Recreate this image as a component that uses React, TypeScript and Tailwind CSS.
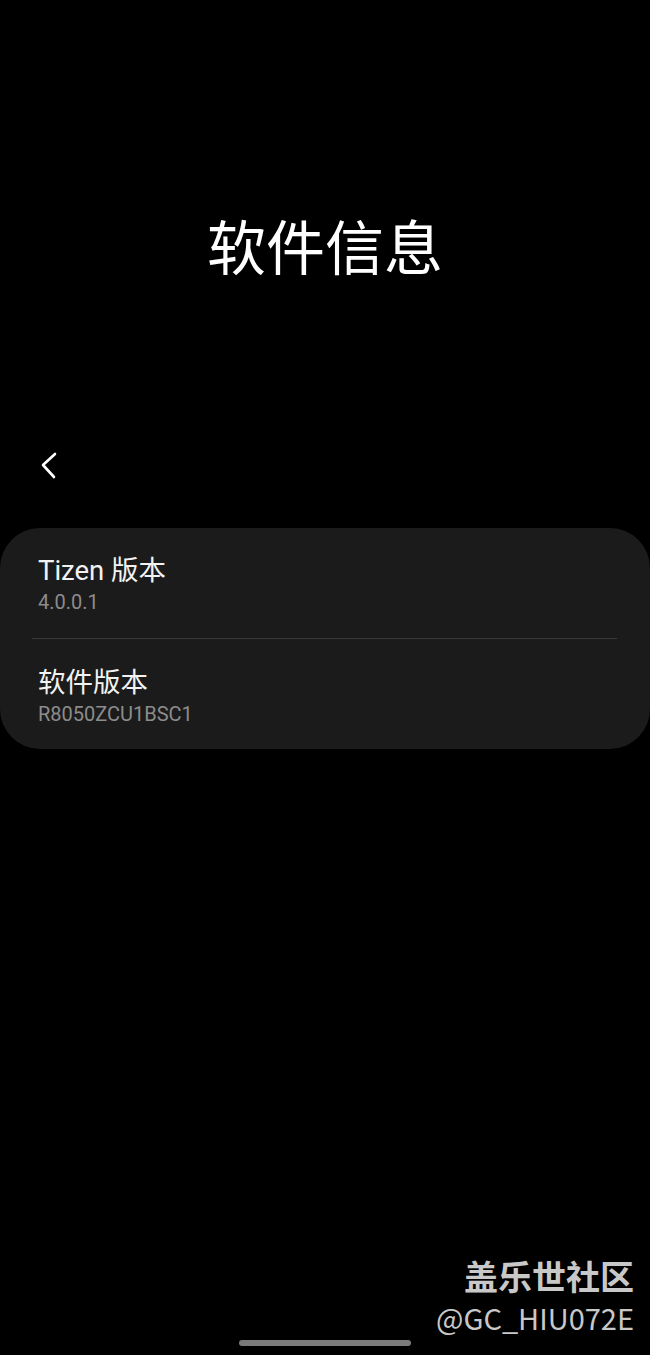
const cjk = "font-['Roboto','Noto_Sans_CJK_SC',sans-serif]";

function ChevronLeft() {
  return (
    <svg width="20" height="30" viewBox="0 0 20 30" fill="none" className="block">
      <path
        d="M15 2 L3 13 L14 25"
        stroke="#ffffff"
        strokeWidth="2.6"
        strokeLinecap="round"
        strokeLinejoin="round"
      />
    </svg>
  );
}

function InfoRow({ title, value }: { title: string; value: string }) {
  return (
    <div className="px-[38px]">
      <div className="text-[27.5px] leading-[32px] text-[#f2f2f2]">{title}</div>
      <div className="text-[20px] leading-[30px] text-[#8c8c8c]">{value}</div>
    </div>
  );
}

export default function App() {
  return (
    <div className={`relative h-[1355px] w-[650px] overflow-hidden bg-black ${cjk}`}>
      <div className="h-[215px]" />
      <h1 className="text-center text-[59px] leading-[60px] font-normal text-white font-['Noto_Sans_CJK_SC',sans-serif]">
        软件信息
      </h1>

      <div className="mt-[177px] pl-[40px]">
        <ChevronLeft />
      </div>

      <div className="mt-[46px] rounded-[40px] bg-[#1b1b1b] pt-[27px] pb-[20px]">
        <InfoRow title="Tizen 版本" value="4.0.0.1" />
        <div className="mt-[21px] mb-[28px] ml-[32px] mr-[33px] h-px bg-[#3a3a3a]" />
        <InfoRow title="软件版本" value="R8050ZCU1BSC1" />
      </div>

      <div className="absolute right-[16px] bottom-[20px] flex flex-col items-end text-[#c8c8c8]">
        <div className="text-[34px] leading-[38px] font-bold font-['Noto_Sans_CJK_SC',sans-serif]">
          盖乐世社区
        </div>
        <div className="mt-[4px] text-[29px] leading-[36px] font-['Noto_Sans_CJK_SC',sans-serif]">
          @GC_HIU072E
        </div>
      </div>

      <div className="absolute bottom-[9px] left-[239px] h-[6px] w-[172px] rounded-full bg-[#7a7a7a]" />
    </div>
  );
}
